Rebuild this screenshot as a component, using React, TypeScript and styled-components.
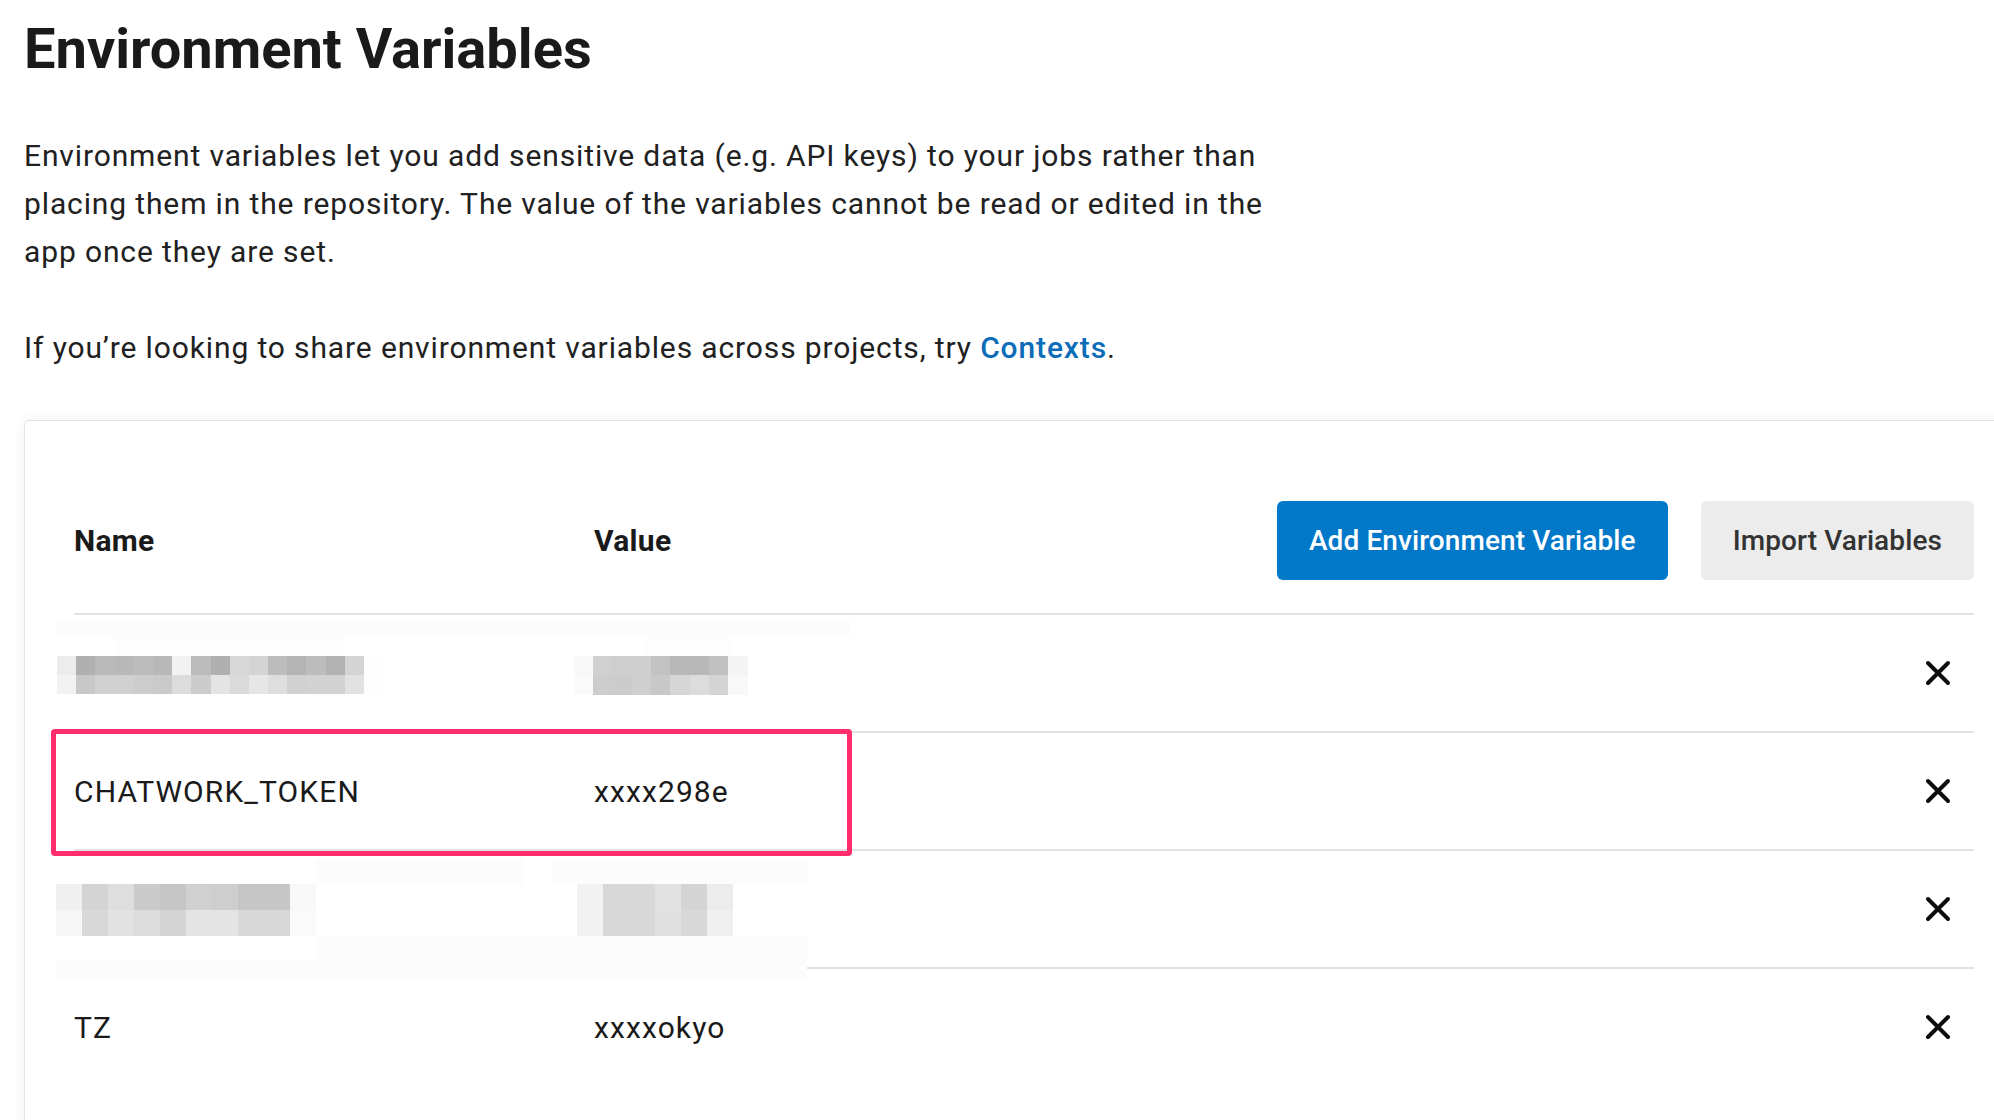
import React from 'react';
import styled, { createGlobalStyle } from 'styled-components';

const GlobalStyle = createGlobalStyle`
  html, body {
    margin: 0;
    padding: 0;
    background: #ffffff;
    overflow: hidden;
  }
  body {
    font-family: Roboto, "Liberation Sans", Arial, sans-serif;
    color: #1b1b1b;
  }
`;

type Redaction = {
  left: number;
  top: number;
  size: number;
  rows: string[][];
};

type EnvVar = {
  name: string;
  value: string;
  highlighted?: boolean;
  redactions?: Redaction[];
  bands?: { left: number; top: number; width: number; height: number; shade: string }[];
};

const hex = (s: string) => s.split(' ').map((c) => `#${c}`);

// rows that are blurred out in the original screenshot are kept as pixel mosaics
const VARIABLES: EnvVar[] = [
  {
    name: '',
    value: '',
    bands: [
      { left: -17, top: 4, width: 793, height: 17, shade: '#fcfcfc' },
      { left: 40, top: 21, width: 230, height: 20, shade: '#fdfdfd' },
      { left: 570, top: 21, width: 86, height: 20, shade: '#fdfdfd' },
    ],
    redactions: [
      {
        left: -17,
        top: 41,
        size: 19.2,
        rows: [
          hex('ececec b0b0b0 bababa b8b8b8 bcbcbc b8b8b8 f2f2f2 bbbbbb b0b0b0 d8d8d8 d4d4d4 bcbcbc b4b4b4 bcbcbc b2b2b2 d4d4d4 fdfdfd'),
          hex('f2f2f2 c8c8c8 d0d0d0 d0d0d0 cdcdcd cacaca dcdcdc cccccc e4e4e4 dadada e6e6e6 dedede d0d0d0 d2d2d2 d2d2d2 e2e2e2 fdfdfd'),
        ],
      },
      {
        left: 500,
        top: 41,
        size: 19.3,
        rows: [
          hex('f8f8f8 d0d0d0 cecece cfcfcf c2c2c2 b8b8b8 b8b8b8 c0c0c0 f4f4f4'),
          hex('fafafa cdcdcd cccccc cfcfcf c8c8c8 d6d6d6 dcdcdc d4d4d4 f8f8f8'),
        ],
      },
    ],
  },
  { name: 'CHATWORK_TOKEN', value: 'xxxx298e', highlighted: true },
  {
    name: '',
    value: '',
    bands: [
      { left: 241, top: 8, width: 208, height: 25, shade: '#fcfcfc' },
      { left: 478, top: 8, width: 255, height: 25, shade: '#fcfcfc' },
      { left: 241, top: 85, width: 492, height: 25, shade: '#fcfcfc' },
      { left: -18, top: 110, width: 751, height: 20, shade: '#fcfcfc' },
    ],
    redactions: [
      {
        left: -18,
        top: 33,
        size: 26,
        rows: [
          hex('f0f0f0 d4d4d4 dedede cacaca c6c6c6 d0d0d0 cecece c6c6c6 c6c6c6 f8f8f8'),
          hex('f6f6f6 d8d8d8 e2e2e2 dcdcdc d4d4d4 e4e4e4 e4e4e4 d8d8d8 d8d8d8 fafafa'),
        ],
      },
      {
        left: 503,
        top: 33,
        size: 26,
        rows: [
          hex('f2f2f2 d8d8d8 d8d8d8 e2e2e2 d4d4d4 ececec'),
          hex('f2f2f2 d8d8d8 d8d8d8 e0e0e0 d8d8d8 f0f0f0'),
        ],
      },
    ],
  },
  { name: 'TZ', value: 'xxxxokyo' },
];

const Page = styled.main`
  padding: 16px 0 0 24px;
`;

const Title = styled.h1`
  margin: 0 0 49px;
  font-size: 56px;
  line-height: 67px;
  font-weight: 700;
  color: #1a1a1a;
`;

const Paragraph = styled.p`
  margin: 0 0 48px;
  max-width: 1280px;
  font-size: 30px;
  line-height: 48px;
  font-weight: 400;
  letter-spacing: 0.87px;
  color: #212121;
`;

const Link = styled.a`
  color: #0b6db8;
  font-weight: 500;
  text-decoration: none;
`;

const Card = styled.section`
  box-sizing: border-box;
  width: 2000px;
  margin-top: 1px;
  padding: 0 49px 80px;
  background: #ffffff;
  border: 1px solid #e3e3e3;
  border-radius: 5px;
  box-shadow: 0 0 14px rgba(0, 0, 0, 0.06);
`;

const Grid = styled.div`
  display: grid;
  grid-template-columns: 520px 1fr auto;
  align-items: center;
  border-bottom: 2px solid #e2e2e2;
`;

const HeaderRow = styled(Grid)`
  padding: 80px 0 33px;
`;

const HeadCell = styled.div`
  font-size: 30px;
  font-weight: 700;
  letter-spacing: 0.3px;
  color: #1a1a1a;
`;

const Actions = styled.div`
  display: flex;
  gap: 33px;
`;

const Button = styled.button<{ $primary?: boolean }>`
  height: 79px;
  padding: 0 32px;
  border: none;
  border-radius: 6px;
  font-family: Roboto, "Liberation Sans", Arial, sans-serif;
  font-size: 28px;
  font-weight: 500;
  letter-spacing: 0.1px;
  cursor: pointer;
  background: ${(p) => (p.$primary ? '#0278c9' : '#ececec')};
  color: ${(p) => (p.$primary ? '#ffffff' : '#333333')};
`;

const Row = styled(Grid)<{ $last?: boolean }>`
  position: relative;
  height: 116px;
  border-bottom-color: ${(p) => (p.$last ? 'transparent' : '#e2e2e2')};
`;

const Cell = styled.div`
  font-size: 30px;
  font-weight: 400;
  letter-spacing: 1.1px;
  color: #1a1a1a;
`;

const DeleteButton = styled.button`
  display: flex;
  align-items: center;
  justify-content: center;
  width: 72px;
  height: 72px;
  padding: 0;
  border: none;
  background: transparent;
  color: #0d0d0d;
  cursor: pointer;
`;

const Highlight = styled.div`
  position: absolute;
  left: -23px;
  top: -4px;
  width: 801px;
  height: 127px;
  box-sizing: border-box;
  border: 5px solid #ff2d6b;
  border-radius: 4px;
  pointer-events: none;
  z-index: 2;
`;

const Band = styled.div<{ $shade: string }>`
  position: absolute;
  background: ${(p) => p.$shade};
  z-index: 1;
`;

const Mosaic = styled.div<{ $cols: number; $size: number }>`
  position: absolute;
  display: grid;
  grid-template-columns: repeat(${(p) => p.$cols}, ${(p) => p.$size}px);
  grid-auto-rows: ${(p) => p.$size}px;
  z-index: 1;
`;

const Tile = styled.span<{ $shade: string }>`
  background: ${(p) => p.$shade};
`;

const CloseIcon = () => (
  <svg width="26" height="26" viewBox="0 0 26 26" fill="none">
    <path
      d="M3 3L23 23M23 3L3 23"
      stroke="currentColor"
      strokeWidth="4"
      strokeLinecap="round"
    />
  </svg>
);

const App = () => {
  return (
    <>
      <GlobalStyle />
      <Page>
        <Title>Environment Variables</Title>
        <Paragraph>
          Environment variables let you add sensitive data (e.g. API keys) to your jobs rather than
          placing them in the repository. The value of the variables cannot be read or edited in the
          app once they are set.
        </Paragraph>
        <Paragraph>
          If you’re looking to share environment variables across projects, try{' '}
          <Link href="#">Contexts</Link>.
        </Paragraph>

        <Card>
          <HeaderRow>
            <HeadCell>Name</HeadCell>
            <HeadCell>Value</HeadCell>
            <Actions>
              <Button $primary>Add Environment Variable</Button>
              <Button>Import Variables</Button>
            </Actions>
          </HeaderRow>

          {VARIABLES.map((v, i) => (
            <Row key={i} $last={i === VARIABLES.length - 1}>
              <Cell>{v.name}</Cell>
              <Cell>{v.value}</Cell>
              <DeleteButton aria-label="Delete variable">
                <CloseIcon />
              </DeleteButton>
              {v.bands?.map((b, j) => (
                <Band
                  key={`b${j}`}
                  $shade={b.shade}
                  style={{ left: b.left, top: b.top, width: b.width, height: b.height }}
                />
              ))}
              {v.redactions?.map((r, j) => (
                <Mosaic
                  key={`m${j}`}
                  $cols={r.rows[0].length}
                  $size={r.size}
                  style={{ left: r.left, top: r.top }}
                >
                  {r.rows.flat().map((shade, k) => (
                    <Tile key={k} $shade={shade} />
                  ))}
                </Mosaic>
              ))}
              {v.highlighted && <Highlight />}
            </Row>
          ))}
        </Card>
      </Page>
    </>
  );
};

export default App;
